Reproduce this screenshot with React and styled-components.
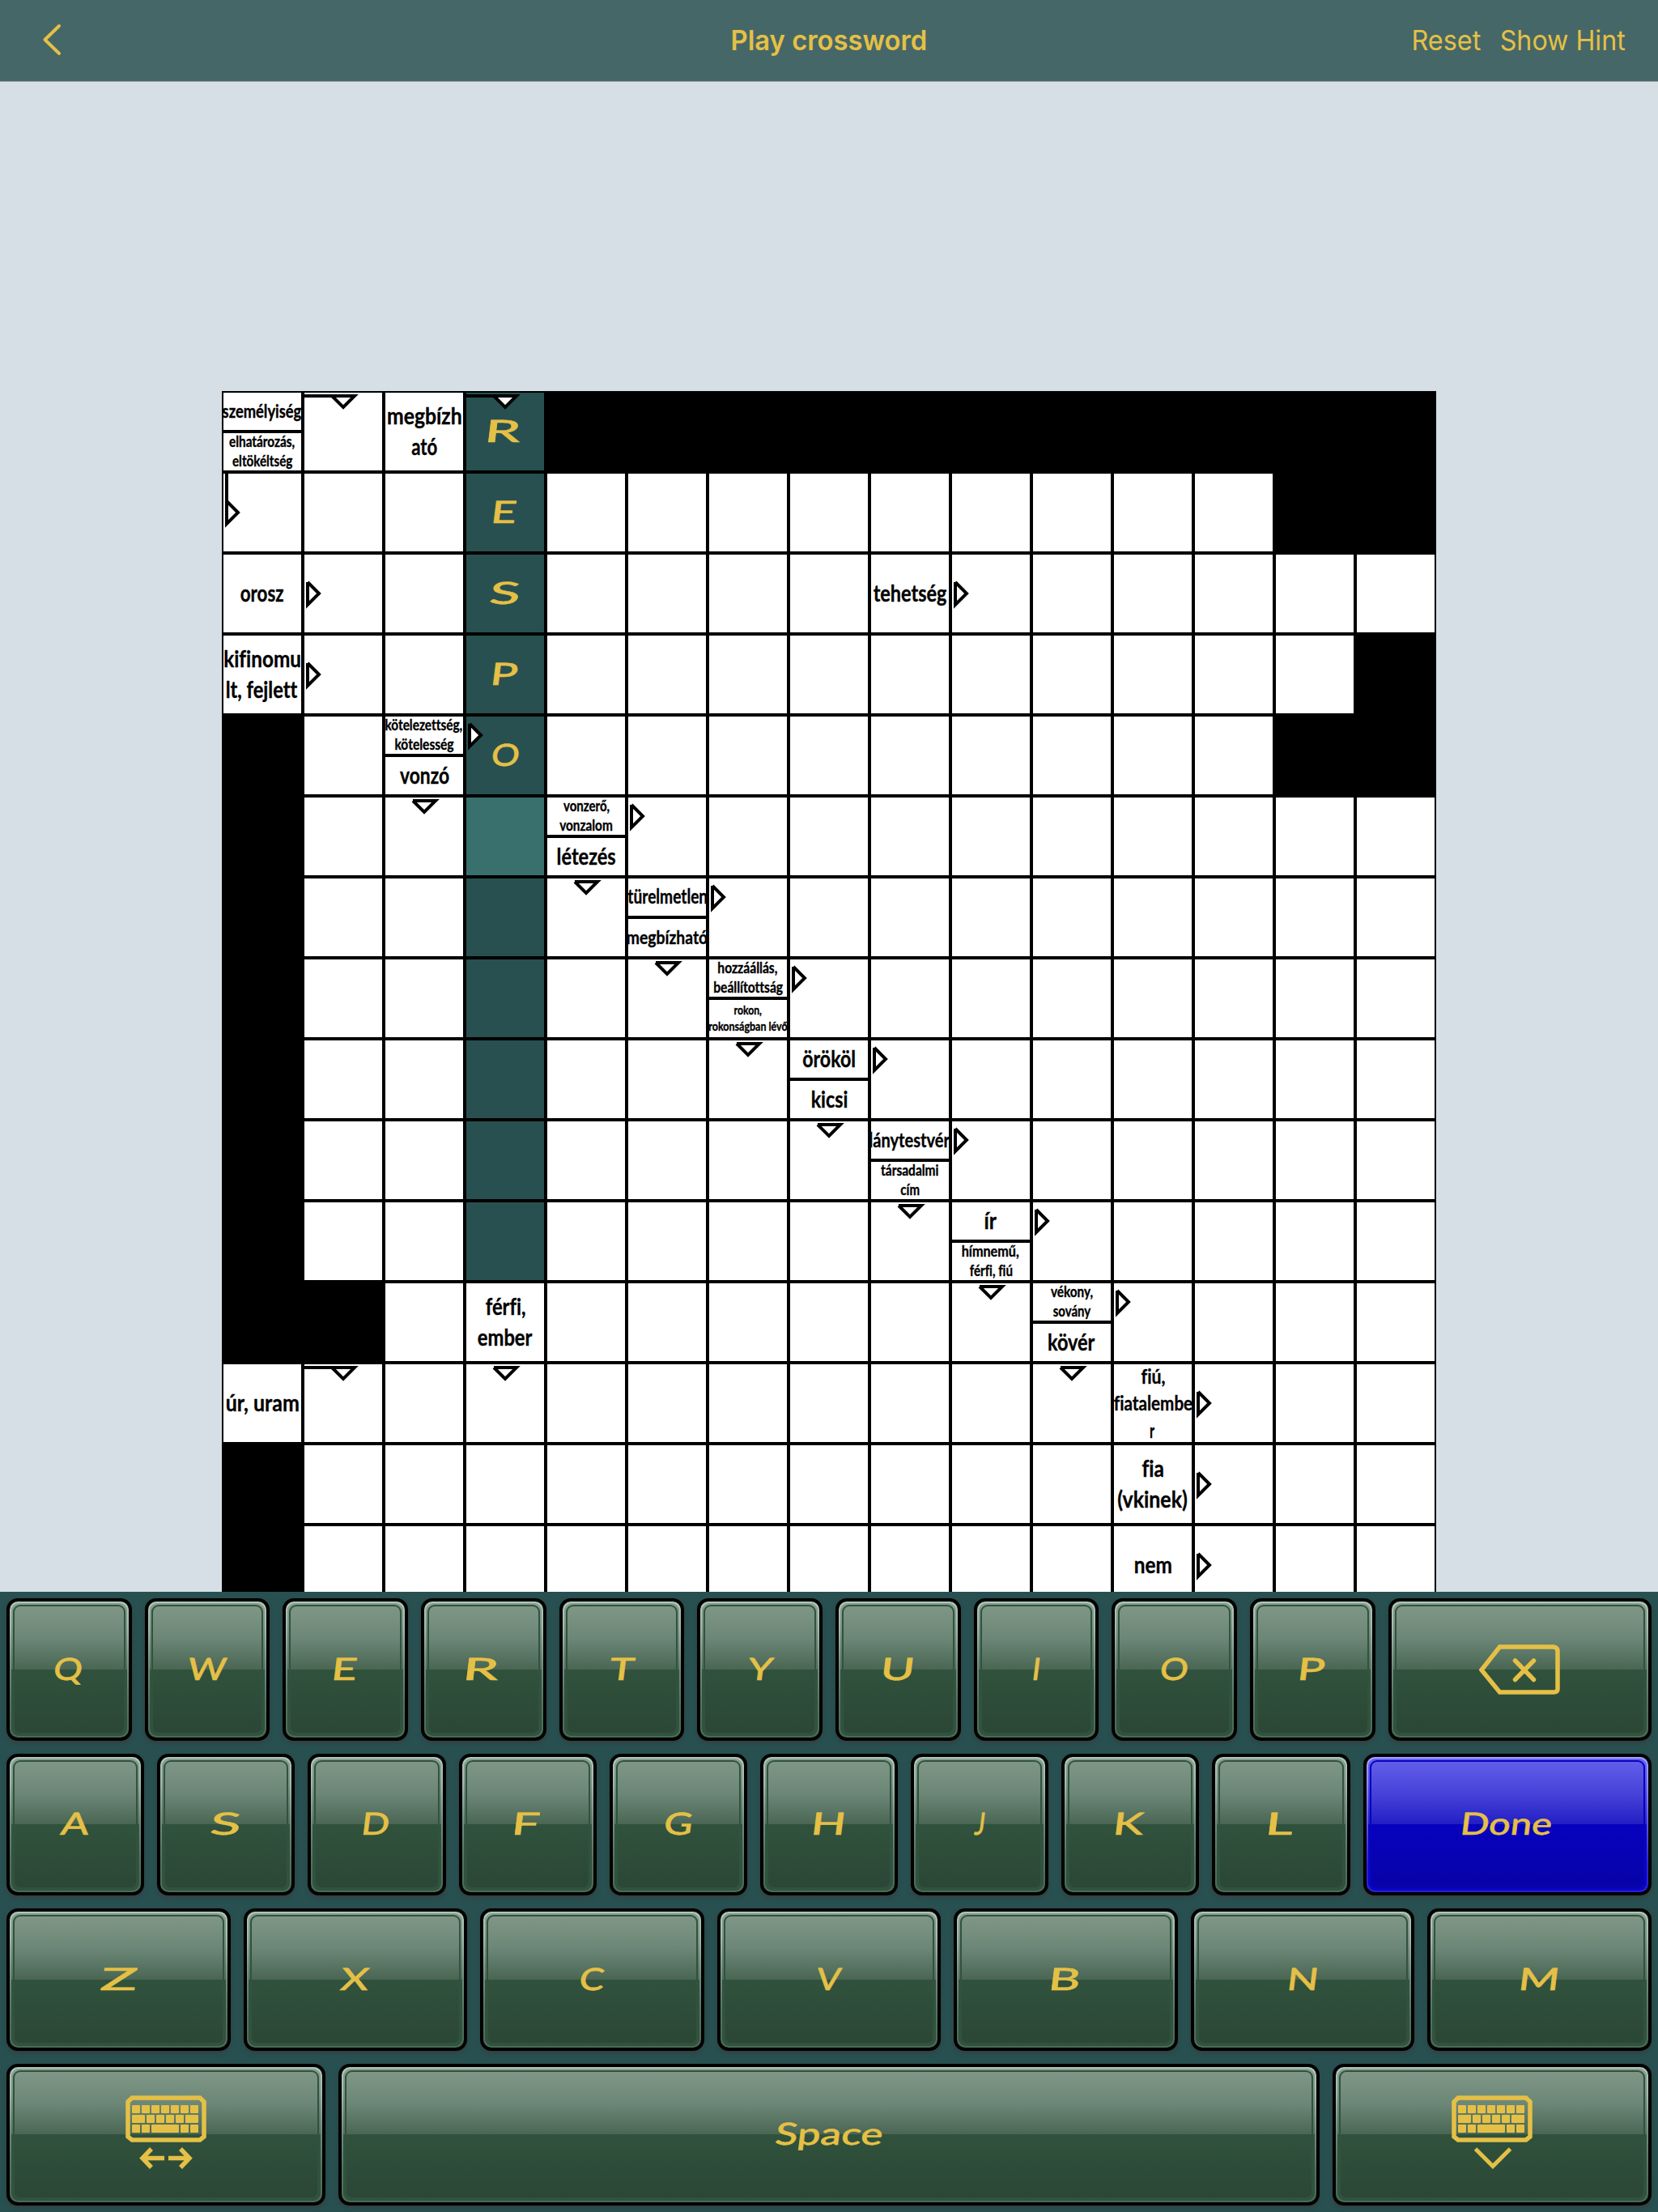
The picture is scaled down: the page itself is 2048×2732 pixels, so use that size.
import React from "react";
import styled, { createGlobalStyle, css } from "styled-components";

const COLORS = {
  gold: "#e5c046",
  header: "#466767",
  page: "#d5dfe5",
  teal: "#285050",
  tealActive: "#39706e",
};

const GlobalStyle = createGlobalStyle`
  *, *::before, *::after { box-sizing: border-box; }
  html, body { margin: 0; padding: 0; }
  body { background: ${COLORS.page}; }
`;

/* ---------- text fitted to a given ink width ---------- */

const FACES = {
  clue: {
    family: '"Lato"', weight: 700, stroke: 0.35, slant: 0, tall: 1.04,
    drop: (size) => -0.06 * size + (size < 25 ? 1 : 0),
  },
  hand: { family: '"Lato"', weight: 500, stroke: 0.5, slant: -7, tall: 1, drop: (size) => -0.03 * size },
  title: { family: '"Inter"', weight: 600, stroke: 0, slant: 0, tall: 1, drop: () => 1 },
  bar: { family: '"Inter"', weight: 400, stroke: 0, slant: 0, tall: 1, drop: () => 1 },
};

const pen = document.createElement("canvas").getContext("2d");

function fitTransform(text, face, size, width) {
  const f = FACES[face];
  pen.font = `${f.weight} ${size}px ${f.family}, sans-serif`;
  const m = pen.measureText(text);
  const ink = m.actualBoundingBoxLeft + m.actualBoundingBoxRight;
  const lean = text.length > 1 || f.slant === 0 ? 0 : 2;
  const k = (width - lean) / ink;
  const inkCentre = (m.actualBoundingBoxRight - m.actualBoundingBoxLeft) / 2;
  const dx = (m.width / 2 - inkCentre) * k;
  return (
    `translate(${dx.toFixed(2)}px, ${f.drop(size).toFixed(2)}px) ` +
    `skewX(${f.slant}deg) scale(${k.toFixed(4)}, ${f.tall})`
  );
}

const Word = styled.span`
  display: inline-block;
  white-space: nowrap;
  font-family: ${(p) => FACES[p.$face].family}, "Noto Sans", sans-serif;
  font-weight: ${(p) => FACES[p.$face].weight};
  font-size: ${(p) => p.$size}px;
  font-variant-ligatures: none;
  line-height: 1.366;
  -webkit-text-stroke: ${(p) => FACES[p.$face].stroke}px currentColor;
`;

function Fitted({ face, size, width, children }) {
  return (
    <Word $face={face} $size={size} style={{ transform: fitTransform(children, face, size, width) }}>
      {children}
    </Word>
  );
}

/* ---------- page frame ---------- */

const Screen = styled.div`
  width: 2048px;
  height: 2732px;
  display: flex;
  flex-direction: column;
  overflow: hidden;
  background: ${COLORS.page};
`;

const Header = styled.header`
  flex: none;
  height: 101px;
  display: grid;
  grid-template-columns: 1fr 240px 1fr;
  align-items: center;
  padding: 0 40px;
  background: ${COLORS.header};
  border-bottom: 1px solid #8d9495;
  color: ${COLORS.gold};
`;

const BackButton = styled.div`
  display: flex;
  align-items: center;
  padding-left: 12px;
`;

const Title = styled.div`
  display: flex;
  justify-content: center;
`;

const Actions = styled.div`
  display: flex;
  justify-content: flex-end;
  gap: 25px;
`;

const Action = styled.div`
  width: ${(p) => p.$w}px;
  display: flex;
  justify-content: center;
`;

const Stage = styled.main`
  flex: none;
  height: 1865px;
  padding-top: 382px;
  display: flex;
  justify-content: center;
  align-items: flex-start;
  overflow: hidden;
`;

/* ---------- crossword ---------- */

const Board = styled.div`
  flex: none;
  display: grid;
  grid-template-columns: repeat(15, 100px);
  grid-auto-rows: 100px;
`;

const cellFill = {
  blank: "#fff",
  black: "#000",
  word: COLORS.teal,
  active: COLORS.tealActive,
};

const centred = css`
  display: flex;
  flex-direction: column;
  align-items: center;
  justify-content: center;
`;

const Cell = styled.div`
  position: relative;
  overflow: hidden;
  border: 2px solid #000;
  background: ${(p) => cellFill[p.$kind]};
  color: ${COLORS.gold};
  ${centred}
`;

const ClueCell = styled.div`
  display: flex;
  flex-direction: column;
  background: #fff;
  color: #000;
`;

const Clue = styled.div`
  flex: 1 1 0;
  min-height: 0;
  overflow: hidden;
  border: 2px solid #000;
  ${centred}
`;

const ArrowMark = styled.svg`
  position: absolute;
  left: -2px;
  top: -2px;
  width: 100px;
  height: 100px;
  fill: #fff;
  stroke: #000;
  stroke-width: 4;
  stroke-miterlimit: 10;
`;

const ARROWS = {
  right: "M6 36L20 50L6 64L6 36",
  rightHalf: "M6 11L20 25L6 39L6 11",
  down: "M36 6L50 20L64 6L36 6",
  bentDown: "M0 6L64 6L50 20L36 6",
  bentRight: "M6 0L6 64L20 50L6 36",
};

const HAND_WIDTH = {
  A: 37, B: 34, C: 31, D: 32, E: 28, F: 31, G: 34, H: 36, I: 7, J: 13, K: 36, L: 30, M: 45,
  N: 33, O: 34, P: 30, Q: 37, R: 41, S: 37, T: 32, U: 35, V: 32, W: 49, X: 37, Y: 34, Z: 46,
  Done: 108, Space: 130,
};

/* Each clue is a list of halves; each half is [size, [line, width], ...]. */
const CLUES = {
  "0,0": [[22, ["személyiség", 98]], [17.6, ["elhatározás,", 81], ["eltökéltség", 74]]],
  "0,2": [[28, ["megbízh", 91], ["ató", 32]]],
  "2,0": [[28, ["orosz", 54]]],
  "2,8": [[28, ["tehetség", 91]]],
  "3,0": [[28, ["kifinomu", 94], ["lt, fejlett", 87]]],
  "4,2": [[17.6, ["kötelezettség,", 94], ["kötelesség", 72]], [28, ["vonzó", 61]]],
  "5,4": [[17.6, ["vonzerő,", 57], ["vonzalom", 65]], [28, ["létezés", 72]]],
  "6,5": [[23, ["türelmetlen", 98]], [22, ["megbízható", 99]]],
  "7,6": [[17.6, ["hozzáállás,", 73], ["beállítottság", 84]], [14.6, ["rokon,", 34], ["rokonságban lévő", 97]]],
  "8,7": [[28, ["örököl", 65]], [28, ["kicsi", 44]]],
  "9,8": [[24, ["lánytestvér", 99]], [17.6, ["társadalmi", 71], ["cím", 23]]],
  "10,9": [[28, ["ír", 15]], [17.6, ["hímnemű,", 70], ["férfi, fiú", 52]]],
  "11,3": [[28, ["férfi,", 49], ["ember", 68]]],
  "11,10": [[17.6, ["vékony,", 52], ["sovány", 47]], [28, ["kövér", 58]]],
  "12,0": [[28, ["úr, uram", 89]]],
  "12,11": [[24.4, ["fiú,", 29], ["fiatalembe", 97], ["r", 6]]],
  "13,11": [[28, ["fia", 26], ["(vkinek)", 85]]],
  "14,11": [[28, ["nem", 45]]],
};

const MARKS = {
  "0,1": "bentDown", "0,3": "bentDown", "12,1": "bentDown", "1,0": "bentRight",
  "2,1": "right", "3,1": "right", "2,9": "right", "12,12": "right", "13,12": "right", "14,12": "right",
  "4,3": "rightHalf", "5,5": "rightHalf", "6,6": "rightHalf", "7,7": "rightHalf",
  "8,8": "rightHalf", "9,9": "rightHalf", "10,10": "rightHalf", "11,11": "rightHalf",
  "5,2": "down", "6,4": "down", "7,5": "down", "8,6": "down", "9,7": "down",
  "10,8": "down", "11,9": "down", "12,10": "down", "12,3": "down",
};

/* # black, . blank, w selected word, a active cell, c clue */
const ROWS = [
  "c.cw###########",
  "...w.........##",
  "c..w....c......",
  "c..w..........#",
  "#.cw.........##",
  "#..ac..........",
  "#..w.c.........",
  "#..w..c........",
  "#..w...c.......",
  "#..w....c......",
  "#..w.....c.....",
  "##.c......c....",
  "c..........c...",
  "#..........c...",
  "#..........c...",
];
const KINDS = { "#": "black", ".": "blank", w: "word", a: "active" };
const ANSWER = "RESPO";

function Square({ row, col, kind }) {
  const id = `${row},${col}`;
  if (kind === "c") {
    return (
      <ClueCell>
        {CLUES[id].map(([size, ...lines], i) => (
          <Clue key={i}>
            {lines.map(([text, width]) => (
              <Fitted key={text} face="clue" size={size} width={width}>{text}</Fitted>
            ))}
          </Clue>
        ))}
      </ClueCell>
    );
  }
  const letter = kind === "w" ? ANSWER[row] : undefined;
  return (
    <Cell $kind={KINDS[kind]}>
      {letter && <Fitted face="hand" size={38} width={HAND_WIDTH[letter]}>{letter}</Fitted>}
      {MARKS[id] && (
        <ArrowMark viewBox="0 0 100 100"><path d={ARROWS[MARKS[id]]} /></ArrowMark>
      )}
    </Cell>
  );
}

/* ---------- keyboard ---------- */

const Keyboard = styled.section`
  flex: none;
  height: 766px;
  padding: 8px;
  display: grid;
  grid-template-columns: 100%;
  grid-template-rows: repeat(4, 1fr);
  gap: 16px;
  background: ${COLORS.teal};
`;

const KeyRow = styled.div`
  display: grid;
  grid-template-columns: repeat(${(p) => p.$columns}, minmax(0, 1fr));
  gap: 16px;
  min-height: 0;
`;

const skins = {
  green: {
    light: "linear-gradient(#b1c5b9 0, #a3b9ac 20%, #6f8b7b 50%, #55755f 75%, #486a53 100%)",
    rim: "linear-gradient(#84a08f 0, #7a9584 15%, #4f6c5a 50%, #315340 50%, #31523f 100%)",
    groove: "#31523f",
    face: "linear-gradient(#7f9686 0, #6c8777 25%, #4a6653 49.9%, #30523d 50%, #2b4735 100%)",
  },
  blue: {
    light: "linear-gradient(#a39fff 0, #8e89f8 20%, #5a55e4 50%, #2a25d0 80%, #2823cc 100%)",
    rim: "linear-gradient(#6561f5 0, #5652ea 15%, #221dcc 50%, #0903c4 50%, #0b05cb 100%)",
    groove: "#0903bd",
    face: "linear-gradient(#625de8 0, #4743da 25%, #221ec4 49.9%, #0702be 50%, #0703a8 100%)",
  },
};

const KeyShell = styled.div`
  grid-column: span ${(p) => p.$span};
  min-width: 0;
  display: flex;
  padding: 2px;
  border: 4px solid #000;
  border-radius: 14px;
  background: ${(p) => skins[p.$skin].light};
  box-shadow: 0 3px 4px rgba(58, 58, 60, 0.7);
`;

const KeyRim = styled.div`
  flex: 1;
  min-width: 0;
  display: flex;
  padding: 2px;
  border-radius: 9px;
  background: ${(p) => skins[p.$skin].rim};
`;

const KeyFace = styled.div`
  flex: 1;
  min-width: 0;
  border: 2px solid ${(p) => skins[p.$skin].groove};
  border-radius: 9px;
  background: ${(p) => skins[p.$skin].face};
  color: ${COLORS.gold};
  display: flex;
  align-items: center;
  justify-content: center;
`;

function Key({ span = 1, skin = "green", label, children }) {
  return (
    <KeyShell $span={span} $skin={skin}>
      <KeyRim $skin={skin}>
        <KeyFace $skin={skin}>
          {label ? <Fitted face="hand" size={38} width={HAND_WIDTH[label]}>{label}</Fitted> : children}
        </KeyFace>
      </KeyRim>
    </KeyShell>
  );
}

const Glyph = styled.svg`
  display: block;
  fill: none;
  stroke: ${COLORS.gold};
  stroke-width: 5.5;
`;

const BackspaceIcon = () => (
  <Glyph width="100" height="62" viewBox="0 0 100 62">
    <path d="M3 31.5L25.5 3H92Q97 4 97 8V55Q97 59 92 59H25.5Z" />
    <path d="M44.5 20L67.5 43.5M67.5 20L44.5 43.5" strokeLinecap="round" />
  </Glyph>
);

const KEYCAPS = [
  [14, [[8, 10], [20, 10], [32, 10], [44, 10], [56, 10], [68, 10], [80, 10]]],
  [26, [[8, 16], [26, 10], [38, 10], [50, 10], [62, 10], [74, 16]]],
  [38, [[8, 10], [20, 10], [32, 34], [68, 10], [80, 10]]],
];

const KeyboardIcon = ({ children }) => (
  <Glyph width="100" height="100" viewBox="0 0 100 100">
    <path d="M8 5H92L97 10V53L92 57H8L3 53V10Z" />
    <g fill={COLORS.gold} stroke="none">
      {KEYCAPS.map(([y, caps]) =>
        caps.map(([x, w]) => <rect key={`${x}-${y}`} x={x} y={y} width={w} height="10" rx="1" />)
      )}
    </g>
    {children}
  </Glyph>
);

const letters = (s) => s.split("").map((c) => <Key key={c} label={c} />);

export default function App() {
  return (
    <>
      <GlobalStyle />
      <Screen>
        <Header>
          <BackButton>
            <Glyph width="26" height="42" viewBox="0 0 26 42">
              <path d="M21 3L3.5 20L21 37" strokeWidth="4" strokeLinecap="round" strokeLinejoin="round" />
            </Glyph>
          </BackButton>
          <Title><Fitted face="title" size={33.5} width={239}>Play crossword</Fitted></Title>
          <Actions>
            <Action $w={84}><Fitted face="bar" size={33.5} width={84}>Reset</Fitted></Action>
            <Action $w={154}><Fitted face="bar" size={33.5} width={154}>Show Hint</Fitted></Action>
          </Actions>
        </Header>
        <Stage>
          <Board>
            {ROWS.map((line, row) =>
              line.split("").map((kind, col) => (
                <Square key={`${row},${col}`} row={row} col={col} kind={kind} />
              ))
            )}
          </Board>
        </Stage>
        <Keyboard>
          <KeyRow $columns={12}>
            {letters("QWERTYUIOP")}
            <Key span={2}><BackspaceIcon /></Key>
          </KeyRow>
          <KeyRow $columns={11}>
            {letters("ASDFGHJKL")}
            <Key span={2} skin="blue" label="Done" />
          </KeyRow>
          <KeyRow $columns={7}>{letters("ZXCVBNM")}</KeyRow>
          <KeyRow $columns={5}>
            <Key>
              <KeyboardIcon>
                <path d="M21 79.5H48M32 68L21 79.5L32 91" />
                <path d="M53 79.5H79M68 68L79 79.5L68 91" />
              </KeyboardIcon>
            </Key>
            <Key span={3} label="Space" />
            <Key>
              <KeyboardIcon>
                <path d="M29.5 68L51 89.5L72.5 68" strokeWidth="5" />
              </KeyboardIcon>
            </Key>
          </KeyRow>
        </Keyboard>
      </Screen>
    </>
  );
}
